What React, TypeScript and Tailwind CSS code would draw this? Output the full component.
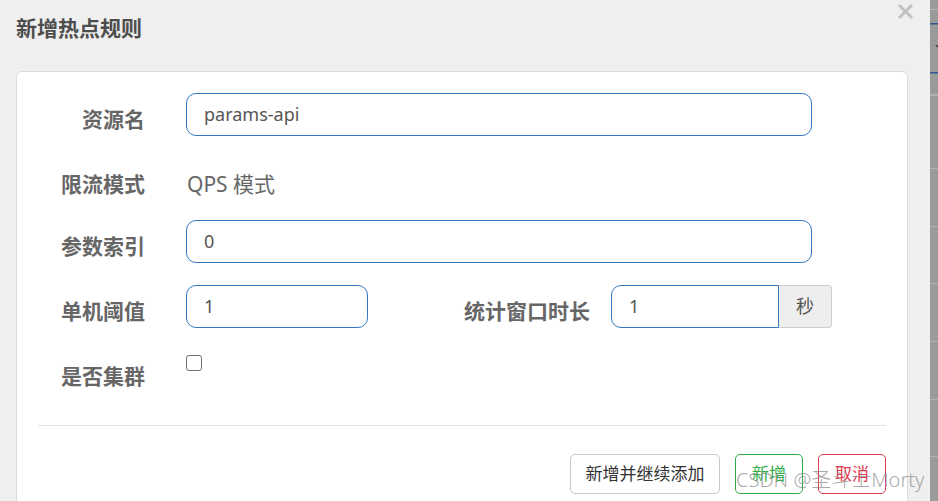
import React from "react";

const cjk = { fontFamily: '"Noto Sans", "Noto Sans CJK SC", sans-serif' };

function FieldLabel({ children, width = "w-[107px]" }: { children: React.ReactNode; width?: string }) {
  return (
    <div className={`${width} mt-[8px] shrink-0 text-right text-[21px] leading-[30px] font-bold text-[#666]`}>
      {children}
    </div>
  );
}

function TextBox({ value, width }: { value: string; width: string }) {
  return (
    <div
      className={`${width} flex h-[43px] items-center rounded-[10px] border border-[#3379c0] bg-white pl-[17px] text-[18px] text-[#555]`}
    >
      {value}
    </div>
  );
}

function BackdropStrip() {
  // slice of the page behind the modal, dimmed
  return (
    <svg width="8" height="501" className="block shrink-0" viewBox="0 0 8 501">
      <rect x="0" y="0" width="8" height="501" fill="#9a9a9a" />
      <rect x="0" y="9" width="8" height="1" fill="#b4b4b4" />
      <rect x="0" y="23" width="8" height="1.5" fill="#2f5a8a" />
      <path d="M5 45 L8 45 L8 48 Z" fill="#444" />
      <rect x="0" y="72" width="8" height="1.5" fill="#2f5a8a" />
      <rect x="0" y="94" width="8" height="2" fill="#b0b0b0" />
      <rect x="0" y="168" width="8" height="1" fill="#b0b0b0" />
      <rect x="0" y="226" width="8" height="1" fill="#b0b0b0" />
      <rect x="0" y="283" width="8" height="1" fill="#b0b0b0" />
      <rect x="0" y="341" width="8" height="1" fill="#b0b0b0" />
      <rect x="0" y="399" width="8" height="1" fill="#b0b0b0" />
      <rect x="0" y="456" width="8" height="1" fill="#b0b0b0" />
    </svg>
  );
}

export default function App() {
  return (
    <div className="flex h-[501px] w-[938px] overflow-hidden" style={cjk}>
      <div className="relative h-[501px] w-[930px] shrink-0 overflow-hidden bg-[#efefef]">
        <button className="absolute top-[4px] left-[898px] h-[15px] w-[15px]" aria-label="close">
          <svg viewBox="0 0 15 15" width="15" height="15">
            <path d="M2 2 L13 13 M13 2 L2 13" stroke="#c2c2c2" strokeWidth="3" strokeLinecap="square" />
          </svg>
        </button>

        <h2 className="mt-[14px] pl-[16px] text-[21px] leading-[28px] font-bold text-[#4d4d4d]">新增热点规则</h2>

        <div className="mt-[29px] ml-[16px] h-[470px] w-[892px] rounded-[6px] border border-[#dcdcdc] bg-white px-[21px] pt-[21px]">
          <div className="flex h-[43px] items-center">
            <FieldLabel>资源名</FieldLabel>
            <div className="ml-[41px]">
              <TextBox value="params-api" width="w-[626px]" />
            </div>
          </div>

          <div className="mt-[22px] flex h-[43px] items-center">
            <FieldLabel>限流模式</FieldLabel>
            <div className="mt-[8px] ml-[42px] text-[21px] leading-[30px] text-[#666]">QPS 模式</div>
          </div>

          <div className="mt-[19px] flex h-[43px] items-center">
            <FieldLabel>参数索引</FieldLabel>
            <div className="ml-[41px]">
              <TextBox value="0" width="w-[626px]" />
            </div>
          </div>

          <div className="mt-[22px] flex h-[43px] items-center">
            <FieldLabel>单机阈值</FieldLabel>
            <div className="ml-[41px]">
              <TextBox value="1" width="w-[182px]" />
            </div>
            <FieldLabel width="w-[222px]">统计窗口时长</FieldLabel>
            <div className="ml-[21px] flex h-[43px]">
              <div className="flex h-[43px] w-[168px] items-center rounded-l-[10px] border border-[#3379c0] bg-white pl-[17px] text-[18px] text-[#555]">
                1
              </div>
              <div className="flex h-[43px] w-[53px] items-center justify-center rounded-r-[4px] border border-l-0 border-[#cccccc] bg-[#eeeeee] text-[18px] text-[#555]">
                秒
              </div>
            </div>
          </div>

          <div className="mt-[22px] flex h-[43px] items-center">
            <FieldLabel>是否集群</FieldLabel>
            <span className="ml-[41px] block h-[16px] w-[16px] self-start mt-[5px] rounded-[3px] border-[1.5px] border-[#707070] bg-white" />
          </div>

          <div className="mt-[32px] h-px w-full bg-[#e5e5e5]" />

          <div className="mt-[28px] flex justify-end gap-[15px]">
            <button className="h-[40px] w-[150px] rounded-[5px] border border-[#c8c8c8] bg-white text-[17px] text-[#333]">
              新增并继续添加
            </button>
            <button className="h-[40px] w-[68px] rounded-[5px] border border-[#2ead47] bg-white text-[17px] text-[#2ead47]">
              新增
            </button>
            <button className="h-[40px] w-[68px] rounded-[5px] border border-[#e23a4e] bg-white text-[17px] text-[#e23a4e]">
              取消
            </button>
          </div>
        </div>

        <div className="pointer-events-none absolute top-[467px] left-[736px] text-[20px] leading-[26px] font-light whitespace-nowrap text-[#8c8c8c]/75">
          CSDN @圣斗士Morty
        </div>
      </div>
      <BackdropStrip />
    </div>
  );
}
